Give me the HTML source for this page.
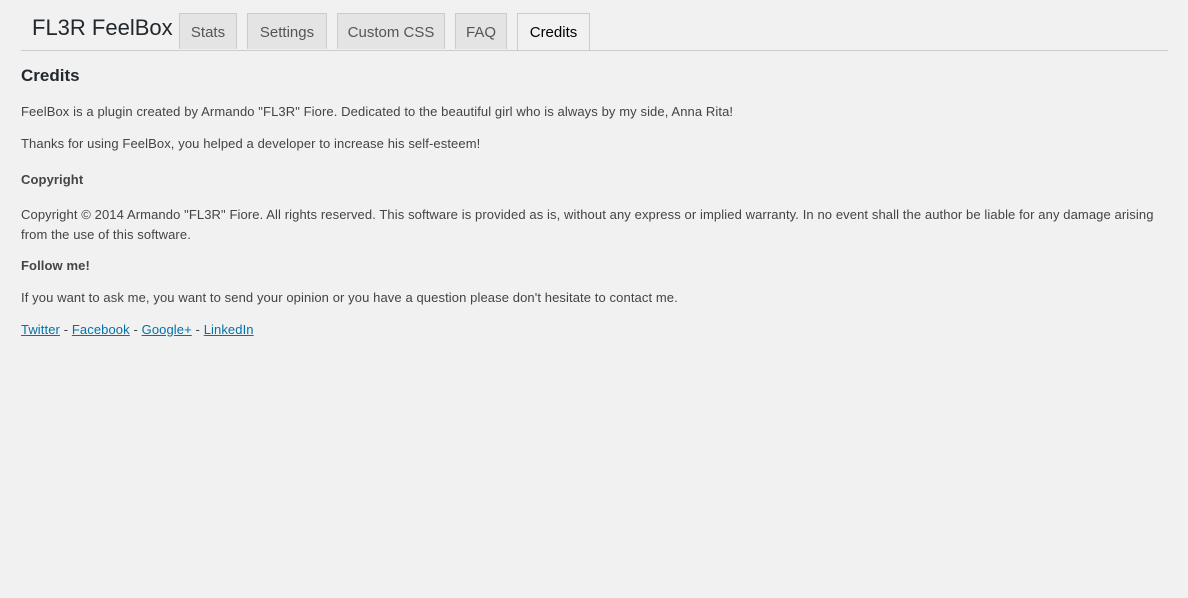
<!DOCTYPE html>
<html><head><style>
body{margin:0;background:#f1f1f1;font-family:"Liberation Sans",sans-serif;color:#444;font-size:13px;}
.wrap{position:absolute;left:21px;top:0;width:1147px;}
.h{position:absolute;left:0;top:50px;width:1147px;border-top:1px solid #ccc;}
.title{position:absolute;left:11px;top:15px;font-size:22px;color:#23282d;}
.tab{position:absolute;top:13px;height:36px;border:1px solid #ccc;border-bottom:none;background:#e4e4e4;color:#555;font-size:15px;line-height:38px;text-align:center;box-sizing:border-box;}
.tab.a{background:#f1f1f1;color:#000;height:38px;}
p{position:absolute;left:0;margin:0;line-height:20px;width:1147px;letter-spacing:0.1px;}
a{color:#0073aa;}
</style></head><body>
<div class="wrap">
<div class="title">FL3R FeelBox</div>
<div class="tab" style="left:158px;width:58px">Stats</div>
<div class="tab" style="left:226px;width:80px">Settings</div>
<div class="tab" style="left:316px;width:108px">Custom CSS</div>
<div class="tab" style="left:434px;width:52px">FAQ</div>
<div class="tab a" style="left:496px;width:73px">Credits</div>
<div class="h"></div>
<p style="top:66px;font-size:17px;font-weight:bold;color:#23282d;letter-spacing:0">Credits</p>
<p style="top:102px">FeelBox is a plugin created by Armando "FL3R" Fiore. Dedicated to the beautiful girl who is always by my side, Anna Rita!</p>
<p style="top:134px">Thanks for using FeelBox, you helped a developer to increase his self-esteem!</p>
<p style="top:170px;font-weight:bold">Copyright</p>
<p style="top:205px">Copyright © 2014 Armando "FL3R" Fiore. All rights reserved. This software is provided as is, without any express or implied warranty. In no event shall the author be liable for any damage arising from the use of this software.</p>
<p style="top:256px;font-weight:bold">Follow me!</p>
<p style="top:288px">If you want to ask me, you want to send your opinion or you have a question please don't hesitate to contact me.</p>
<p style="top:320px"><a href="#">Twitter</a> - <a href="#">Facebook</a> - <a href="#">Google+</a> - <a href="#">LinkedIn</a></p>
</div>
</body></html>
